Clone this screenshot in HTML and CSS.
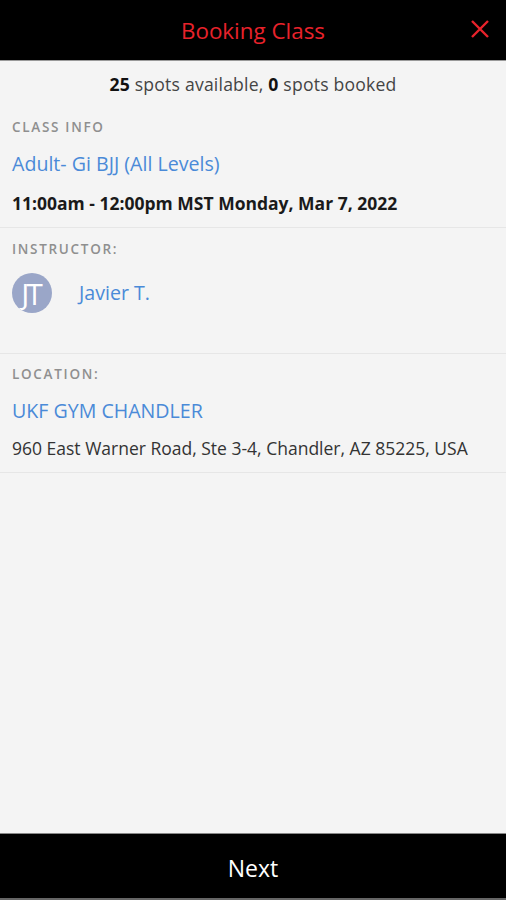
FILE: index.html
```html
<!DOCTYPE html>
<html lang="en">
<head>
  <meta charset="UTF-8">
  <title>Booking Class</title>
  <link rel="stylesheet" href="styles.css">
</head>
<body>
<div id="page">
  <div id="header">
    <h1>Booking Class</h1>
    <a href="#" class="close">
      <svg width="20" height="20" viewBox="0 0 20 20">
        <path d="M2 2 L18 18 M18 2 L2 18" stroke="#e8222b" stroke-width="2.4" fill="none"/>
      </svg>
    </a>
  </div>
  <div id="content">
    <p class="spots"><b>25</b> spots available, <b>0</b> spots booked</p>
    <div class="section">
      <div class="label">CLASS INFO</div>
      <a href="#" class="link">Adult- Gi BJJ (All Levels)</a>
      <div class="time">11:00am - 12:00pm MST Monday, Mar 7, 2022</div>
    </div>
    <div class="section instructor">
      <div class="label">INSTRUCTOR:</div>
      <div class="person">
        <span class="avatar">JT</span>
        <a href="#" class="link">Javier T.</a>
      </div>
    </div>
    <div class="section">
      <div class="label">LOCATION:</div>
      <a href="#" class="link">UKF GYM CHANDLER</a>
      <div class="address">960 East Warner Road, Ste 3-4, Chandler, AZ 85225, USA</div>
    </div>
  </div>
  <div id="footer">
    <a href="#">Next</a>
  </div>
</div>
</body>
</html>
```
FILE: styles.css
```css
* {
  margin: 0;
  padding: 0;
}

body {
  background: #f4f4f4;
  font-family: "Open Sans", "Liberation Sans", sans-serif;
  color: #333;
}

a {
  text-decoration: none;
}

#page {
  height: 900px;
  display: flex;
  flex-direction: column;
}

#header {
  height: 60px;
  background: #000;
  border-bottom: 1px solid #999;
  display: flex;
  align-items: center;
  justify-content: center;
  position: relative;
}

#header h1 {
  font-size: 22.4px;
  font-weight: 400;
  color: #e8222b;
}

#header .close {
  position: absolute;
  right: 16px;
  top: 19px;
  line-height: 0;
}

#content {
  flex: 1;
}

.spots {
  text-align: center;
  font-size: 17.6px;
  letter-spacing: 0.2px;
  color: #444;
  margin: 11px 0;
  line-height: 24px;
}

.spots b {
  color: #111;
}

.section {
  padding: 11px 12px 12px;
  border-bottom: 1px solid #e6e6e6;
}

.label {
  font-size: 13.5px;
  letter-spacing: 1.7px;
  color: #8f8f8f;
  line-height: 18px;
  font-weight: 600;
}

.link {
  display: block;
  color: #4a8ad8;
  font-size: 19.6px;
  line-height: 26px;
  margin-top: 15px;
}

.time {
  font-size: 17.5px;
  font-weight: 700;
  color: #1a1a1a;
  line-height: 24px;
  margin-top: 14px;
}

.address {
  font-size: 17.5px;
  color: #333;
  line-height: 24px;
  margin-top: 12px;
}

.instructor {
  padding-top: 12px;
  padding-bottom: 40px;
}

.person {
  display: flex;
  align-items: center;
  gap: 27px;
  margin-top: 15px;
}

.person .link {
  margin-top: 0;
}

.avatar {
  width: 40px;
  height: 40px;
  border-radius: 50%;
  background: #9aa6c8;
  color: #fff;
  font-size: 30px;
  letter-spacing: -3px;
  text-indent: -3px;
  display: flex;
  align-items: center;
  justify-content: center;
  overflow: hidden;
}

#footer {
  height: 64px;
  background: #000;
  border-top: 1px solid #888;
  border-bottom: 2px solid #666;
  display: flex;
  align-items: center;
  justify-content: center;
}

#footer a {
  color: #fff;
  font-size: 23px;
  padding-top: 3px;
}
```
